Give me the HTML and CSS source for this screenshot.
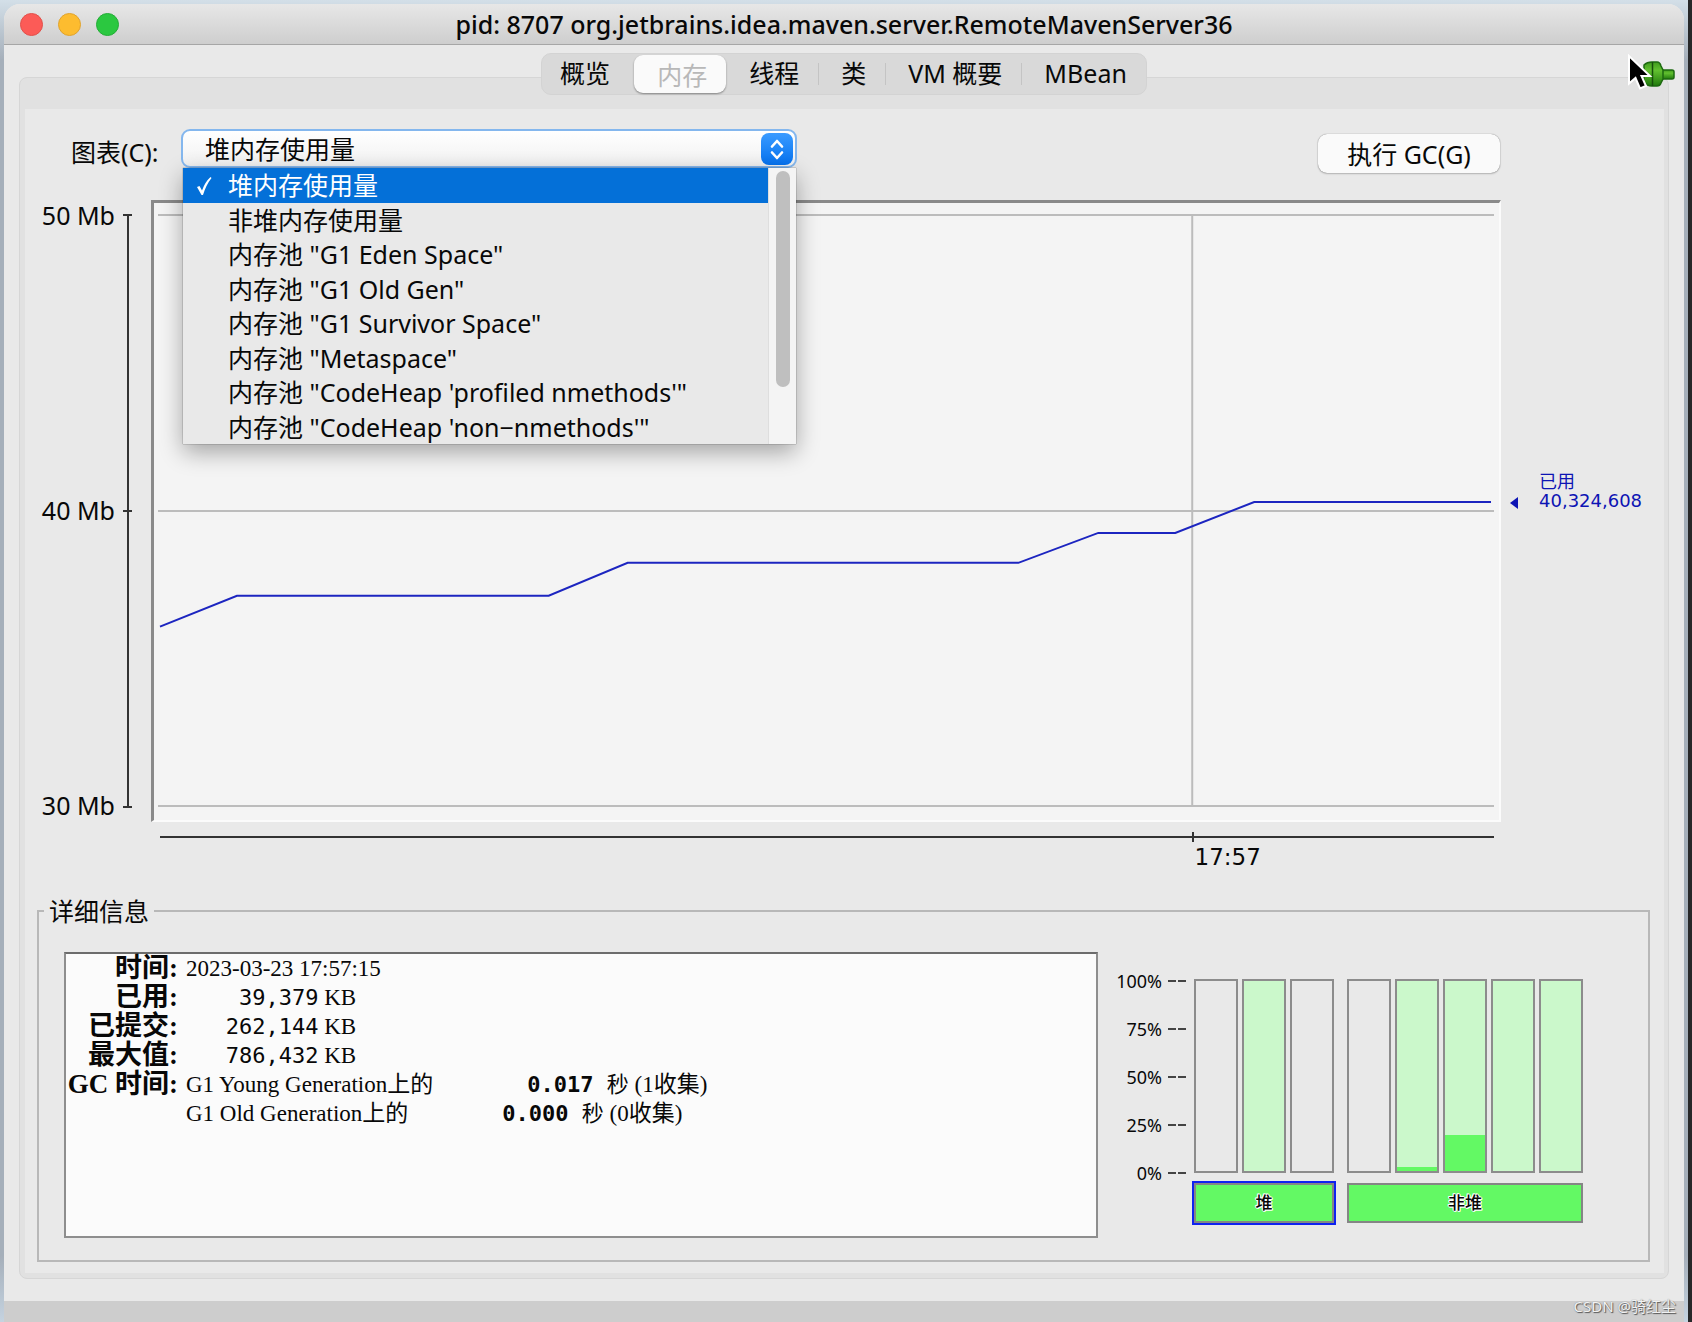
FILE: index.html
```html
<!DOCTYPE html>
<html lang="zh-CN">
<head>
<meta charset="utf-8">
<title>pid: 8707 org.jetbrains.idea.maven.server.RemoteMavenServer36</title>
<link rel="stylesheet" href="styles.css">
</head>
<body>
<div class="desktop">
<main class="window">
  <header class="titlebar">
    <div class="lights">
      <button class="light close" aria-label="关闭"></button>
      <button class="light minimize" aria-label="最小化"></button>
      <button class="light zoom" aria-label="缩放"></button>
    </div>
    <h1>pid: 8707 org.jetbrains.idea.maven.server.RemoteMavenServer36</h1>
  </header>

  <nav class="tabs" role="tablist">
    <button role="tab">概览</button>
    <button role="tab" class="active" aria-selected="true">内存</button>
    <button role="tab">线程</button>
    <button role="tab" class="divided">类</button>
    <button role="tab" class="divided">VM 概要</button>
    <button role="tab" class="divided">MBean</button>
  </nav>

  <svg class="plug" viewBox="0 0 48 36" aria-hidden="true">
    <defs>
      <linearGradient id="green" x1="0" y1="0" x2="0" y2="1">
        <stop offset="0" stop-color="#3f9a1c"/><stop offset=".35" stop-color="#62c030"/><stop offset="1" stop-color="#1f7a0c"/>
      </linearGradient>
    </defs>
    <rect x="32" y="16" width="14" height="9" rx="2" fill="url(#green)" stroke="#1d6a10" stroke-width="1.5"/>
    <path d="M16 11 Q19 8 24 8 H29 Q32 8 33 12 L35 16 V25 L33 29 Q32 32 29 32 H24 Q19 32 16 28Z" fill="url(#green)" stroke="#1d6a10" stroke-width="1.5"/>
    <path d="M24.5 8V32" stroke="#174f0c" stroke-width="1.5"/>
    <path d="M1 2V29.5L7.5 24L12 34.5L18 32L13.5 22H22Z" fill="#000" stroke="#fff" stroke-width="2"/>
  </svg>

  <section class="frame">
  <div class="panel">
    <div class="toolbar">
      <label for="chart">图表(C):</label>
      <div class="combo">
        <select id="chart"><option>堆内存使用量</option></select>
        <span class="stepper"><svg viewBox="0 0 32 32" aria-hidden="true"><path d="M11 13.5L16 8L21 13.5M11 19.5L16 25L21 19.5" fill="none" stroke="#fff" stroke-width="2.6" stroke-linecap="round" stroke-linejoin="round"/></svg></span>
        <div class="popup">
          <ul role="listbox" aria-label="图表">
            <li role="option" class="selected" aria-selected="true"><svg class="check" viewBox="0 0 18 20" aria-hidden="true"><path d="M2 11L4.5 10L7 14.5Q10 6 15.5 1L16.5 2Q11 9 8 19H6.5Z" fill="#fff"/></svg>堆内存使用量</li>
            <li role="option">非堆内存使用量</li>
            <li role="option">内存池 "G1 Eden Space"</li>
            <li role="option">内存池 "G1 Old Gen"</li>
            <li role="option">内存池 "G1 Survivor Space"</li>
            <li role="option">内存池 "Metaspace"</li>
            <li role="option">内存池 "CodeHeap 'profiled nmethods'"</li>
            <li role="option">内存池 "CodeHeap 'non−nmethods'"</li>
          </ul>
          <div class="scrollbar"><div class="thumb"></div></div>
        </div>
      </div>
      <button class="gc">执行 GC(G)</button>
    </div>

    <div class="chart">
      <div class="y-labels"><span>50 Mb</span><span>40 Mb</span><span>30 Mb</span></div>
      <div class="y-axis"><i></i><i></i><i></i></div>
      <div class="plot">
        <svg viewBox="0 0 1346 619" preserveAspectRatio="none" role="img" aria-label="堆内存使用量">
          <g class="grid"><path d="M4 12H1341M4 309H1341M4 605H1341M1039 12V605"/></g>
          <path class="series" d="M6 425L83 394H395L474 361H865L945 331H1022L1101 300H1338"/>
        </svg>
      </div>
      <div class="current">
        <svg viewBox="0 0 8 12" aria-hidden="true"><path d="M0 6L8 0V12Z" fill="#0d14b4"/></svg>
        <p>已用<br>40,324,608</p>
      </div>
      <div class="x-axis">
        <svg viewBox="0 0 1350 20" preserveAspectRatio="none" aria-hidden="true"><path d="M9 15H1343M1042 10V20"/></svg>
        <span>17:57</span>
      </div>
    </div>

    <fieldset class="details">
      <legend>详细信息</legend>
      <div class="info">
        <table>
          <tr><th>时间:</th><td>2023-03-23 17:57:15</td></tr>
          <tr><th>已用:</th><td><code>    39,379</code> KB</td></tr>
          <tr><th>已提交:</th><td><code>   262,144</code> KB</td></tr>
          <tr><th>最大值:</th><td><code>   786,432</code> KB</td></tr>
          <tr><th>GC 时间:</th><td>G1 Young Generation上的<code class="time"><strong>0.017</strong> 秒</code> (1收集)</td></tr>
          <tr><th></th><td>G1 Old Generation上的<code class="time"><strong>0.000</strong> 秒</code> (0收集)</td></tr>
        </table>
      </div>
      <div class="pools">
        <div class="scale">
          <span>100% <i></i></span><span>75% <i></i></span><span>50% <i></i></span><span>25% <i></i></span><span>0% <i></i></span>
        </div>
        <div class="pool heap">
          <div class="bars"><div></div><div class="over"></div><div></div></div>
          <button class="active">堆</button>
        </div>
        <div class="pool nonheap">
          <div class="bars"><div></div><div class="over"><b style="height:2%"></b></div><div class="over"><b style="height:19%"></b></div><div class="over"></div><div class="over"></div></div>
          <button>非堆</button>
        </div>
      </div>
    </fieldset>
  </div>
  </section>
  <footer></footer>
</main>
<div class="watermark">CSDN @骑红尘</div>
</div>
</body>
</html>
```
FILE: styles.css
```css
* { box-sizing: border-box; }
body {
  margin: 0;
  font: 25px/30px "Noto Sans", "Noto Sans CJK SC", sans-serif;
  color: #080808;
}
button, select { font: inherit; color: inherit; border: 0; margin: 0; padding: 0; }
svg { display: block; }

.desktop {
  position: relative;
  display: flex;
  min-height: 100vh;
  padding: 4px 4px 0;
  background: linear-gradient(#d3dfe8, #a5afba 60px, #a5afba 95%, #c5d3e0);
  border-right: 4px solid #272829;
}
.window {
  position: relative;
  flex: 1;
  display: flex;
  flex-direction: column;
  background: #e9e9e9;
  border-radius: 16px 16px 0 0;
}
.titlebar {
  display: grid;
  grid-template-columns: 1fr auto 1fr;
  align-items: center;
  height: 41px;
  padding: 0 16px;
  background: linear-gradient(#e7e7e7, #cecece);
  border-bottom: 1px solid #a6a6a6;
  border-radius: 16px 16px 0 0;
}
.titlebar h1 { margin: 0; font-size: 25px; font-weight: 500; }
.lights { display: flex; gap: 15px; }
.light { width: 23px; height: 23px; border-radius: 50%; }
.close { background: #fc5b57; border: 1px solid #e2504a; }
.minimize { background: #fdbc2f; border: 1px solid #e0a32e; }
.zoom { background: #2bc840; border: 1px solid #24ad37; }

.tabs {
  position: relative;
  z-index: 1;
  display: flex;
  align-self: center;
  height: 42px;
  margin: 8px 0 -18px;
  padding: 1px 0;
  background: #d9d9d9;
  border: 1px solid #d3d3d3;
  border-radius: 10px;
}
.tabs button {
  display: flex;
  align-items: center;
  padding: 0 19px 3px 23px;
  background: none;
}
.tabs button:first-child { padding: 0 24px 3px 18px; }
.tabs .active {
  padding-top: 2px;
  padding-bottom: 0;
  color: #b8b8b8;
  background: #fafafa;
  border-radius: 9px;
  box-shadow: 0 1px 2px #0006;
}
.tabs .divided {
  background: linear-gradient(#c4c4c4, #c4c4c4) 0 50% / 1px 22px no-repeat;
}
.plug {
  position: absolute;
  top: 50px;
  right: 8px;
  width: 48px;
  height: 36px;
  z-index: 2;
}

.frame {
  flex: 1;
  display: flex;
  margin: 0 15px 22px;
  padding: 31px 4px 5px 5px;
  background: #e1e1e1;
  border: 1px solid #d6d6d6;
  border-radius: 8px;
}
.panel { flex: 1; display: flex; flex-direction: column; background: #e9e9e9; }

.toolbar {
  display: flex;
  align-items: flex-start;
  height: 67px;
  padding: 20px 164px 0 46px;
}
.toolbar label { width: 110px; padding-top: 8px; }
.combo { position: relative; width: 616px; height: 39px; }
.combo select {
  appearance: none;
  width: 100%;
  height: 100%;
  padding: 0 22px;
  background: linear-gradient(#fff, #f1f1f1);
  border: 2px solid #84b7ee;
  border-radius: 9px;
  outline: 0;
}
.stepper {
  position: absolute;
  top: 4px;
  right: 4px;
  width: 32px;
  height: 32px;
  background: linear-gradient(#3a9bff, #0572f0);
  border-radius: 8px;
}
.popup {
  position: absolute;
  top: 39px;
  left: 2px;
  right: 1px;
  z-index: 3;
  display: flex;
  background: #e9e9e9;
  box-shadow: 0 0 1px #000a, 0 8px 22px #0005;
}
.popup ul { flex: 1; margin: 0; padding: 0; list-style: none; }
.popup li {
  position: relative;
  height: 35px;
  padding-left: 45px;
  line-height: 35px;
}
.popup li:nth-child(even) { height: 34px; line-height: 34px; }
.popup .selected { color: #fff; background: #0470d8; }
.check { position: absolute; left: 12px; top: 8px; width: 18px; height: 20px; }
.scrollbar { width: 28px; padding: 3px 6px 0 7px; background: #f4f4f4; border-left: 1px solid #dedede; }
.thumb { height: 216px; background: #bfbfbf; border-radius: 8px; }
.gc {
  width: 182px;
  height: 39px;
  margin: 5px 0 0 auto;
  background: #fafafa;
  border-radius: 9px;
  box-shadow: 0 0 1px #0008, 0 1px 2px #0003;
}

.chart {
  flex: 1;
  display: grid;
  grid-template: 1fr 60px / 90px 36px 1fr 163px;
  margin-top: 24px;
}
.y-labels { display: flex; flex-direction: column; justify-content: space-between; align-items: flex-end; padding-bottom: 2px; }
.y-axis {
  display: flex;
  flex-direction: column;
  justify-content: space-between;
  width: 9px;
  margin: 14px 0 14px 8px;
  background: linear-gradient(#333, #333) 50% 0 / 2px 100% no-repeat;
}
.y-axis i { height: 2px; background: #333; }
.plot {
  background: #f4f4f4;
  border: solid #fbfbfb;
  border-width: 3px 2px 2px 3px;
  border-top-color: #8a8a8a;
  border-left-color: #8a8a8a;
  min-height: 300px;
  display: flex;
}
.plot svg { width: 100%; height: 0; min-height: 100%; }
.grid { fill: none; stroke: #bcbcbc; stroke-width: 2; }
.series { fill: none; stroke: #1c25c0; stroke-width: 2; }
.current { display: flex; align-items: center; padding: 0 0 32px 9px; color: #0d14b4; }
.current svg { width: 8px; height: 12px; margin-top: 15px; }
.current p { margin: 0 0 8px 21px; font: 18px/19px "DejaVu Sans", "Noto Sans CJK SC", sans-serif; }
.x-axis { grid-column: 3; }
.x-axis svg { width: 100%; height: 20px; fill: none; stroke: #333; stroke-width: 2; }
.x-axis span { display: block; padding-left: calc(77% + 4px); font-family: "DejaVu Sans", sans-serif; font-size: 23px; }

.details {
  display: flex;
  min-width: 0;
  margin: 14px 14px 11px 12px;
  padding: 26px 0 22px 25px;
  border: 2px solid #b8b8b8;
}
.details legend { margin-left: -20px; padding: 0 5px; }
.info {
  flex: 1;
  height: 286px;
  background: #fbfbfb;
  border: 2px solid #8e8e8e;
  border-top-color: #6c6c6c;
}
.info table { border-collapse: collapse; font: 23px/29px "Liberation Serif", "Noto Sans CJK SC", serif; }
.info tr { height: 29px; }
.info th { width: 112px; padding: 0; text-align: right; font-size: 27px; white-space: nowrap; }
.info td { padding: 0 0 0 8px; white-space: pre; }
.info code { font: 22px/29px "DejaVu Sans Mono", "Noto Sans CJK SC", monospace; }
.info .time { padding-left: 94px; }

.pools { flex: 0 0 550px; display: flex; padding: 17px 0 0 17px; }
.scale {
  display: flex;
  flex-direction: column;
  justify-content: space-between;
  width: 71px;
  height: 216px;
  font-size: 18px;
  line-height: 24px;
}
.scale span { display: flex; align-items: center; justify-content: flex-end; gap: 6px; }
.scale i { width: 18px; height: 2px; background: linear-gradient(90deg, #444 8px, #0000 8px, #0000 10px, #444 10px); }
.pool { margin: 10px 0 0 8px; }
.nonheap { margin-left: 13px; }
.bars { display: flex; gap: 4px; }
.bars > div {
  display: flex;
  flex-direction: column;
  justify-content: flex-end;
  width: 44px;
  height: 194px;
  border: 2px solid #8c8c8c;
}
.bars .over { background: #cbf8cb; }
.bars b { background: #63f964; }
.pool button {
  width: 100%;
  height: 40px;
  margin-top: 10px;
  background: #63f964;
  border: 2px solid #858585;
  font-size: 17px;
  font-weight: 500;
  text-shadow: 1px 0 #fff, -1px 0 #fff, 0 1px #fff, 0 -1px #fff, 1px 1px #fff, -1px -1px #fff;
}
.pool .active { outline: 2px solid #0e22f0; }

.window footer { height: 21px; background: #cdcdcd; }
.watermark {
  position: absolute;
  right: 12px;
  bottom: 4px;
  font-size: 15px;
  line-height: 24px;
  color: #f2f2f2;
  text-shadow: 1px 1px 1px #555, 0 0 1px #777;
}
```
